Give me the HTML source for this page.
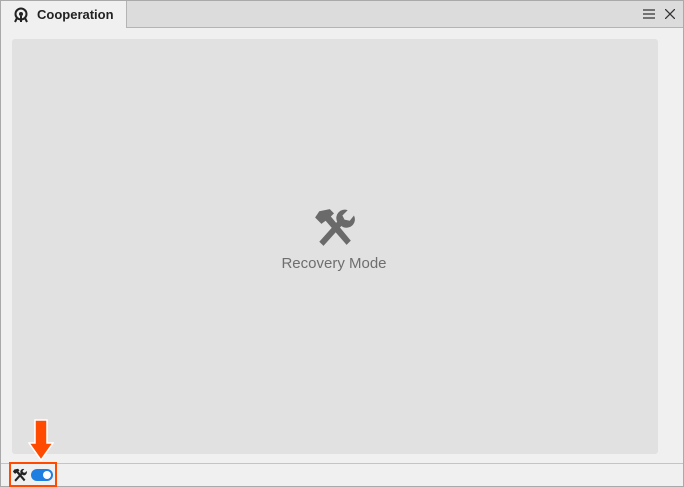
<!DOCTYPE html>
<html><head><style>
body{margin:0;width:684px;height:487px;overflow:hidden;background:#f0f0f0;font-family:"Liberation Sans",sans-serif;position:relative}
.frame{position:absolute;left:0;top:0;width:682px;height:485px;border:1px solid #a9a9a9;background:#f0f0f0}
.bar{position:absolute;left:0;top:0;width:682px;height:26px;background:#dcdcdc;border-bottom:1px solid #b4b4b4}
.tab{position:absolute;left:0;top:0;width:125px;height:27px;background:#f0f0f0;border-right:1px solid #b4b4b4}
.tab span{position:absolute;left:36px;top:6px;font-size:13px;font-weight:bold;color:#222}
.panel{position:absolute;left:11px;top:38px;width:646px;height:415px;background:#e1e1e1;border-radius:3px}
.rm{position:absolute;left:0;width:100%;top:216px;text-align:center;font-size:15px;color:#6e6e6e;padding-right:2px;box-sizing:border-box}
.sep{position:absolute;left:0;top:462px;width:682px;height:1px;background:#c4c4c4}
.red{position:absolute;left:8px;top:461px;width:44px;height:21px;border:2px solid #ff4a00}
.tog{position:absolute;left:30px;top:468px;width:22px;height:12px;border-radius:6px;background:#1e7fe0}
.tog:after{content:"";position:absolute;right:2px;top:2px;width:8px;height:8px;border-radius:50%;background:#fff}
</style></head><body>
<div class="frame">
<div class="bar"></div>
<div class="tab">
<svg style="position:absolute;left:12px;top:6px" width="16" height="16" viewBox="0 0 16 16"><circle cx="8" cy="7" r="5.5" fill="none" stroke="#222" stroke-width="2"/><circle cx="8" cy="7" r="2" fill="#222"/><path d="M4 11 L2 15 M12 11 L14 15 M8 9 L8 15" stroke="#222" stroke-width="2"/></svg>
<span>Cooperation</span></div>
<svg style="position:absolute;left:642px;top:8px" width="12" height="10"><path d="M0 1H12M0 5H12M0 9H12" stroke="#333" stroke-width="1.2"/></svg>
<svg style="position:absolute;left:664px;top:8px" width="10" height="10"><path d="M0 0L10 10M10 0L0 10" stroke="#333" stroke-width="1.3"/></svg>
<div class="panel">
<svg style="position:absolute;left:301px;top:168px" width="42" height="40" viewBox="0 0 40 38"><path d="M6 4 L16 2 L20 6 L17 9 L36 32 L32 36 L12 13 L8 16 L2 10 Z" fill="#6a6a6a"/><path d="M6 33 L23 14 A8 8 0 0 1 33 3 L28 8 L30 12 L35 13 L39 8 A8 8 0 0 1 27 18 L10 37 Z" fill="#6a6a6a"/></svg>
<div class="rm">Recovery Mode</div>
</div>
<div class="sep"></div>
<svg style="position:absolute;left:27px;top:418px" width="26" height="42" viewBox="0 0 26 42"><path d="M7 1H19V24H25L13 41L1 24H7Z" fill="#ff4a00" stroke="#fff" stroke-width="1.5"/></svg>
<div class="red"></div>
<svg style="position:absolute;left:11px;top:467px" width="15" height="14" viewBox="0 0 40 38"><path d="M6 4 L16 2 L20 6 L17 9 L36 32 L32 36 L12 13 L8 16 L2 10 Z" fill="#222"/><path d="M6 33 L23 14 A8 8 0 0 1 33 3 L28 8 L30 12 L35 13 L39 8 A8 8 0 0 1 27 18 L10 37 Z" fill="#222"/></svg>
<div class="tog"></div>
</div>
</body></html>
